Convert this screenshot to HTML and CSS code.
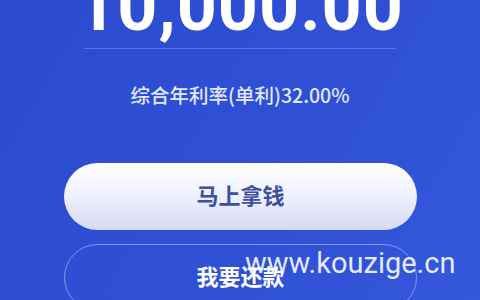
FILE: index.html
```html
<!DOCTYPE html>
<html lang="zh-CN">
<head>
    <meta charset="UTF-8">
    <meta name="viewport" content="width=device-width, initial-scale=1.0">
    <title>借款</title>
    <link rel="stylesheet" href="styles.css">
</head>
<body>
    <div class="page">
        <div class="amount">10,000.00</div>
        <div class="divider"></div>
        <div class="rate">综合年利率(单利)32.00%</div>

        <div class="actions">
            <button type="button" class="btn btn-primary">马上拿钱</button>
            <button type="button" class="btn btn-outline">我要还款</button>
        </div>

        <div class="watermark">www.kouzige.cn</div>
    </div>
</body>
</html>
```

FILE: styles.css
```css
body {
    margin: 0;
    padding: 0;
    font-family: "Noto Sans CJK SC", "Noto Sans", sans-serif;
    background-color: #2e4ed3;
    overflow: hidden;
}
.page {
    position: relative;
    width: 480px;
    height: 300px;
    overflow: hidden;
    background: linear-gradient(120deg, #2c4bcf 0%, #2f50d5 55%, #3457dc 100%);
    color: white;
}
.amount {
    margin-top: -29px;
    font-family: Roboto, "Liberation Sans", sans-serif;
    font-size: 70px;
    font-weight: 700;
    line-height: 70px;
    text-align: center;
    letter-spacing: 1px;
}
.divider {
    height: 1px;
    margin: 7px 84px 0;
    background-color: rgba(255, 255, 255, 0.22);
}
.rate {
    margin-top: 36px;
    font-size: 19.5px;
    font-weight: 500;
    line-height: 20px;
    text-align: center;
    color: #e3e8ff;
}
.actions {
    display: flex;
    flex-direction: column;
    gap: 14px;
    margin: 58px 63px 0 64px;
}
.btn {
    height: 67px;
    padding: 0 0 6px;
    border-radius: 34px;
    font-family: "Noto Sans CJK SC", sans-serif;
    font-size: 22px;
    font-weight: 700;
    cursor: pointer;
}
.btn-primary {
    border: none;
    background: linear-gradient(180deg, #ffffff 0%, #eef0fc 50%, #d5dbf6 100%);
    color: #3d4f9f;
}
.btn-outline {
    border: 1px solid rgba(255, 255, 255, 0.4);
    background: transparent;
    color: white;
}
.watermark {
    position: absolute;
    left: 245px;
    top: 246px;
    font-family: Roboto, sans-serif;
    font-size: 29px;
    line-height: 34px;
    color: rgba(255, 255, 255, 0.88);
    pointer-events: none;
}
```
